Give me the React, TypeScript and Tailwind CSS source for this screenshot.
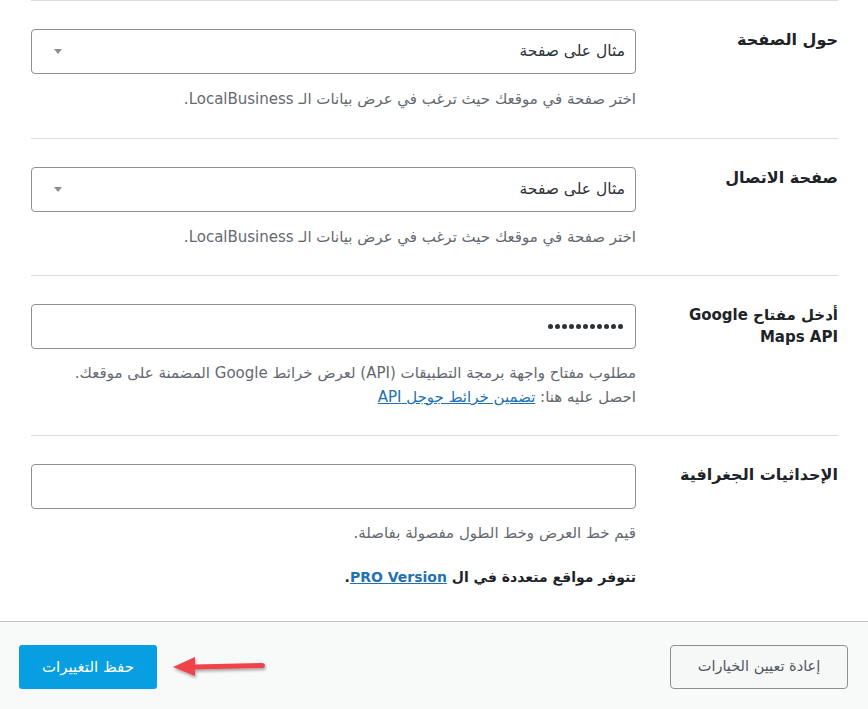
import React from "react";

const font = { fontFamily: "'DejaVu Sans', 'Noto Sans', sans-serif" };

function Caret() {
  return (
    <svg width="8" height="5" viewBox="0 0 8 5" className="block">
      <path d="M0 0 L8 0 L4 5 Z" fill="#8c8f94" />
    </svg>
  );
}

function SelectBox() {
  return (
    <div className="flex h-[45px] w-[605px] items-center justify-between rounded-[4px] border border-[#8c8f94] bg-white pl-[22px] pr-[10px]">
      <span className="text-[15.5px] text-[#2c3338]">مثال على صفحة</span>
      <Caret />
    </div>
  );
}

function Row({
  label,
  children,
  last,
  first,
}: {
  label: React.ReactNode;
  children: React.ReactNode;
  last?: boolean;
  first?: boolean;
}) {
  return (
    <div
      className={
        "flex items-start gap-[15px] pt-[28px] " +
        (last
          ? "pb-[32px]"
          : (first ? "pb-[27px]" : "pb-[26px]") + " border-b border-[#dcdcde]")
      }
    >
      <div className="w-[187px] shrink-0 text-[16px] font-bold leading-[21px] text-[#1d2327]">
        {label}
      </div>
      <div className="w-[605px] shrink-0">{children}</div>
    </div>
  );
}

const dots = Array.from({ length: 11 });

export default function App() {
  return (
    <div dir="rtl" className="min-h-[709px] w-[868px] bg-white" style={font}>
      <div className="mr-[30px] ml-[31px] border-t border-[#dcdcde]">
        <Row label="حول الصفحة" first>
          <SelectBox />
          <p className="mt-[13px] text-[15px] leading-[24px] text-[#646970]">
            اختر صفحة في موقعك حيث ترغب في عرض بيانات الـ LocalBusiness.
          </p>
        </Row>
        <Row label="صفحة الاتصال">
          <SelectBox />
          <p className="mt-[13px] text-[15px] leading-[24px] text-[#646970]">
            اختر صفحة في موقعك حيث ترغب في عرض بيانات الـ LocalBusiness.
          </p>
        </Row>
        <Row label={<span className="text-[15px]">أدخل مفتاح Google Maps API</span>}>
          <div className="flex h-[45px] w-[605px] items-center gap-[2px] rounded-[4px] border border-[#8c8f94] bg-white px-[12px]">
            {dots.map((_, i) => (
              <span key={i} className="h-[5px] w-[5px] rounded-full bg-[#2c3338]" />
            ))}
          </div>
          <p className="mt-[12px] text-[15px] leading-[24px] text-[#646970]">
            مطلوب مفتاح واجهة برمجة التطبيقات (API) لعرض خرائط Google المضمنة على موقعك.
            <br />
            احصل عليه هنا:{" "}
            <a href="#" className="text-[#2271b1] underline">
              تضمين خرائط جوجل API
            </a>
          </p>
        </Row>
        <Row label="الإحداثيات الجغرافية" last>
          <div className="h-[45px] w-[605px] rounded-[4px] border border-[#8c8f94] bg-white" />
          <p className="mt-[12px] text-[15px] leading-[24px] text-[#646970]">
            قيم خط العرض وخط الطول مفصولة بفاصلة.
          </p>
          <p className="mt-[20px] text-[14px] font-bold leading-[24px] text-[#1d2327]">
            تتوفر مواقع متعددة في ال{" "}
            <a href="#" className="text-[#2271b1] underline">
              PRO Version
            </a>
            .
          </p>
        </Row>
      </div>
      <div className="flex h-[88px] items-start justify-between border-t border-[#c3c4c7] bg-[#f8f9f9] pl-[19px] pr-[20px] pt-[23px]">
        <button className="flex h-[44px] w-[178px] items-center justify-center rounded-[4px] border border-[#8c8f94] bg-[#f6f7f7] text-[14.5px] text-[#50575e]">
          إعادة تعيين الخيارات
        </button>
        <div className="flex items-center gap-[14px]">
          <svg width="96" height="26" viewBox="0 0 96 26" className="block">
            <defs>
              <filter id="sh" x="-20%" y="-50%" width="140%" height="200%">
                <feDropShadow dx="1" dy="2" stdDeviation="1.5" floodColor="#000" floodOpacity="0.35" />
              </filter>
            </defs>
            <g filter="url(#sh)">
              <path d="M24 10.5 L91 9 Q94 9 94 11.5 Q94 14 91 14 L24 15.5 Z" fill="#f0434a" />
              <path d="M2 13 L24 3 L24 22 Z" fill="#f0434a" />
            </g>
          </svg>
          <button className="flex h-[44px] w-[138px] items-center justify-center rounded-[3px] bg-[#079fe1] text-[15px] text-white">
            حفظ التغييرات
          </button>
        </div>
      </div>
    </div>
  );
}
